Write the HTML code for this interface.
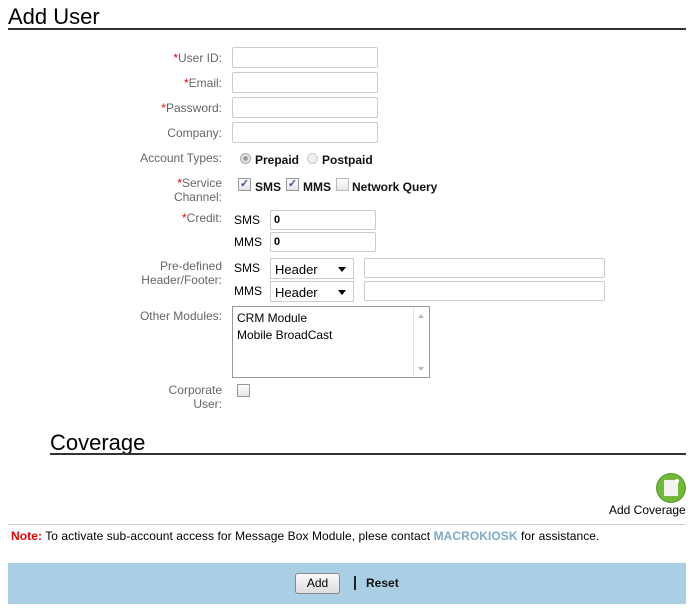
<!DOCTYPE html>
<html><head><meta charset="utf-8">
<style>
*{box-sizing:border-box;margin:0;padding:0}
body{width:693px;height:611px;background:#fff;font-family:"Liberation Sans",Arial,sans-serif;position:relative;overflow:hidden;font-size:12px}
.a{position:absolute}
.lbl{position:absolute;right:471px;color:#666;text-align:right;font-size:12px;line-height:14px}
.r{color:#e00}
.in{position:absolute;border:1px solid #ccc;background:#fff;border-radius:2px}
.b{font-weight:bold;color:#111;font-size:12px}
.cb{position:absolute;width:13px;height:13px;border:1px solid #999;background:linear-gradient(#fff,#e4e4e4)}
.ck{font-size:11px;color:#3a4fa0;line-height:11px;text-align:center;font-weight:bold}
.sel{position:absolute;border:1px solid #ccc;background:#fff;font-size:13px;color:#000;padding:3px 0 0 4px}
.sel:after{content:"";position:absolute;right:7px;top:8px;border-left:4px solid transparent;border-right:4px solid transparent;border-top:5px solid #000}
.s{color:#000;font-size:12px}
</style></head><body>
<div class="a" style="left:8px;top:4px;font-size:22px;color:#000">Add User</div>
<div class="a" style="left:8px;top:28px;width:678px;height:2px;background:#333"></div>

<div class="lbl" style="top:51px"><span class="r">*</span>User ID:</div>
<div class="in" style="left:232px;top:47px;width:146px;height:21px"></div>
<div class="lbl" style="top:76px"><span class="r">*</span>Email:</div>
<div class="in" style="left:232px;top:72px;width:146px;height:21px"></div>
<div class="lbl" style="top:101px"><span class="r">*</span>Password:</div>
<div class="in" style="left:232px;top:97px;width:146px;height:21px"></div>
<div class="lbl" style="top:126px">Company:</div>
<div class="in" style="left:232px;top:122px;width:146px;height:21px"></div>

<div class="lbl" style="top:151px">Account Types:</div>
<div class="a" style="left:240px;top:153px;width:11px;height:11px;border-radius:50%;border:1px solid #aaa;background:radial-gradient(#999 30%,#ddd 40%,#eee)"></div>
<div class="a b" style="left:255px;top:153px">Prepaid</div>
<div class="a" style="left:307px;top:153px;width:11px;height:11px;border-radius:50%;border:1px solid #ccc;background:#eee"></div>
<div class="a b" style="left:322px;top:153px">Postpaid</div>

<div class="lbl" style="top:176px"><span class="r">*</span>Service<br>Channel:</div>
<div class="cb ck" style="left:238px;top:178px">✓</div>
<div class="a b" style="left:255px;top:180px">SMS</div>
<div class="cb ck" style="left:286px;top:178px">✓</div>
<div class="a b" style="left:303px;top:180px">MMS</div>
<div class="cb" style="left:336px;top:178px;border-color:#bbb"></div>
<div class="a b" style="left:352px;top:180px">Network Query</div>

<div class="lbl" style="top:211px"><span class="r">*</span>Credit:</div>
<div class="a s" style="left:234px;top:213px">SMS</div>
<div class="in" style="left:270px;top:210px;width:106px;height:20px;font-size:11px;font-weight:bold;padding:3px 0 0 3px">0</div>
<div class="a s" style="left:234px;top:235px">MMS</div>
<div class="in" style="left:270px;top:232px;width:106px;height:20px;font-size:11px;font-weight:bold;padding:3px 0 0 3px">0</div>

<div class="lbl" style="top:259px">Pre-defined<br>Header/Footer:</div>
<div class="a s" style="left:234px;top:261px">SMS</div>
<div class="sel" style="left:270px;top:258px;width:84px;height:21px">Header</div>
<div class="in" style="left:364px;top:258px;width:241px;height:20px"></div>
<div class="a s" style="left:234px;top:284px">MMS</div>
<div class="sel" style="left:270px;top:281px;width:84px;height:21px">Header</div>
<div class="in" style="left:364px;top:281px;width:241px;height:20px"></div>

<div class="lbl" style="top:309px">Other Modules:</div>
<div class="a" style="left:232px;top:306px;width:198px;height:72px;border:1px solid #999;font-size:12px;line-height:17px;padding:3px 0 0 4px;color:#000">CRM Module<br>Mobile BroadCast
<div class="a" style="right:0;top:0;width:16px;height:70px;background:#fff;border-left:1px solid #e4e4e4"><div class="a" style="left:4px;top:7px;border-left:3px solid transparent;border-right:3px solid transparent;border-bottom:4px solid #bbb"></div><div class="a" style="left:4px;bottom:6px;border-left:3px solid transparent;border-right:3px solid transparent;border-top:4px solid #bbb"></div></div></div>

<div class="lbl" style="top:383px">Corporate<br>User:</div>
<div class="cb" style="left:237px;top:384px"></div>

<div class="a" style="left:50px;top:430px;font-size:22px;color:#000">Coverage</div>
<div class="a" style="left:50px;top:453px;width:636px;height:2px;background:#333"></div>

<svg class="a" style="left:655px;top:472px" width="32" height="32" viewBox="0 0 32 32">
<circle cx="16" cy="16" r="15" fill="#5fa52e"/><circle cx="16" cy="16" r="13.5" fill="#73b83a"/>
<path d="M9 8h11l3 3v13H9z" fill="#f2f2f2"/><circle cx="22" cy="9" r="2" fill="#fff"/></svg>
<div class="a" style="left:609px;top:503px;font-size:12px;color:#000">Add Coverage</div>

<div class="a" style="left:8px;top:524px;width:678px;height:1px;background:#ccc"></div>
<div class="a" style="left:11px;top:529px;font-size:12px;color:#000;letter-spacing:0.07px"><b style="color:#e00">Note:</b> To activate sub-account access for Message Box Module, plese contact <b style="color:#7fa9c9">MACROKIOSK</b> for assistance.</div>

<div class="a" style="left:8px;top:563px;width:678px;height:41px;background:#aacfe4"></div>
<div class="a" style="left:295px;top:573px;width:45px;height:21px;border:1px solid #888;border-radius:3px;background:linear-gradient(#fafafa,#ddd);font-size:12px;text-align:center;line-height:19px;color:#000">Add</div>
<div class="a" style="left:354px;top:576px;width:2px;height:14px;background:#222"></div>
<div class="a" style="left:366px;top:576px;font-size:12px;font-weight:bold;color:#111">Reset</div>
</body></html>
